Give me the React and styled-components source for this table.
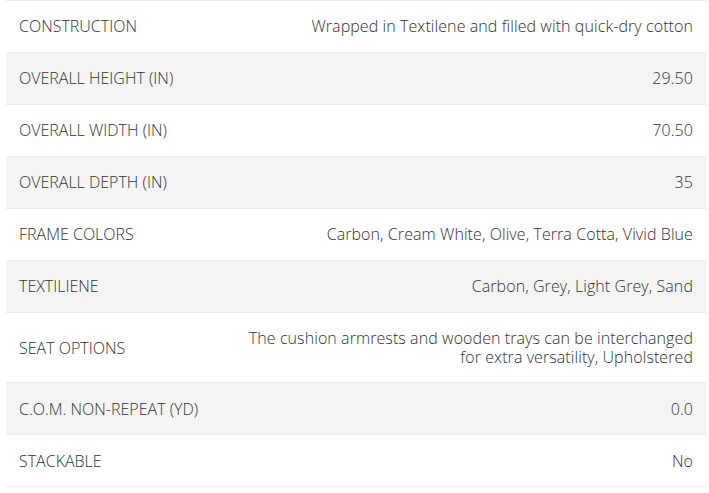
import React from "react";
import styled, { createGlobalStyle } from "styled-components";

const Global = createGlobalStyle`
  html, body { margin: 0; padding: 0; background: #fff; }
  body { font-family: "Open Sans", "Liberation Sans", sans-serif; }
`;

const Wrap = styled.div`
  padding: 0 3px 0 6px;
`;

const Table = styled.div`
  width: 700px;
  border-bottom: 1px solid #ebebeb;
`;

const Row = styled.div`
  box-sizing: border-box;
  min-height: 52px;
  display: grid;
  grid-template-columns: 220px 1fr;
  align-items: center;
  border-top: 1px solid #ebebeb;
  background: ${(p) => (p.$alt ? "#f4f4f4" : "#fff")};
  padding: 16px 13px 15px;
  font-size: 16px;
  font-weight: 300;
  line-height: 19.2px;
  color: #333;
`;

const Label = styled.div`
  text-transform: uppercase;
`;

const Value = styled.div`
  text-align: right;
  letter-spacing: 0.08px;
`;

const rows = [
  ["Construction", "Wrapped in Textilene and filled with quick-dry cotton"],
  ["Overall Height (in)", "29.50"],
  ["Overall Width (in)", "70.50"],
  ["Overall Depth (in)", "35"],
  ["Frame Colors", "Carbon, Cream White, Olive, Terra Cotta, Vivid Blue"],
  ["Textiliene", "Carbon, Grey, Light Grey, Sand"],
  [
    "Seat Options",
    "The cushion armrests and wooden trays can be interchanged for extra versatility, Upholstered",
  ],
  ["C.O.M. Non-Repeat (yd)", "0.0"],
  ["Stackable", "No"],
];

export default function App() {
  return (
    <>
      <Global />
      <Wrap>
        <Table>
          {rows.map(([k, v], i) => (
            <Row key={k} $alt={i % 2 === 1}>
              <Label>{k}</Label>
              <Value>{v}</Value>
            </Row>
          ))}
        </Table>
      </Wrap>
    </>
  );
}
